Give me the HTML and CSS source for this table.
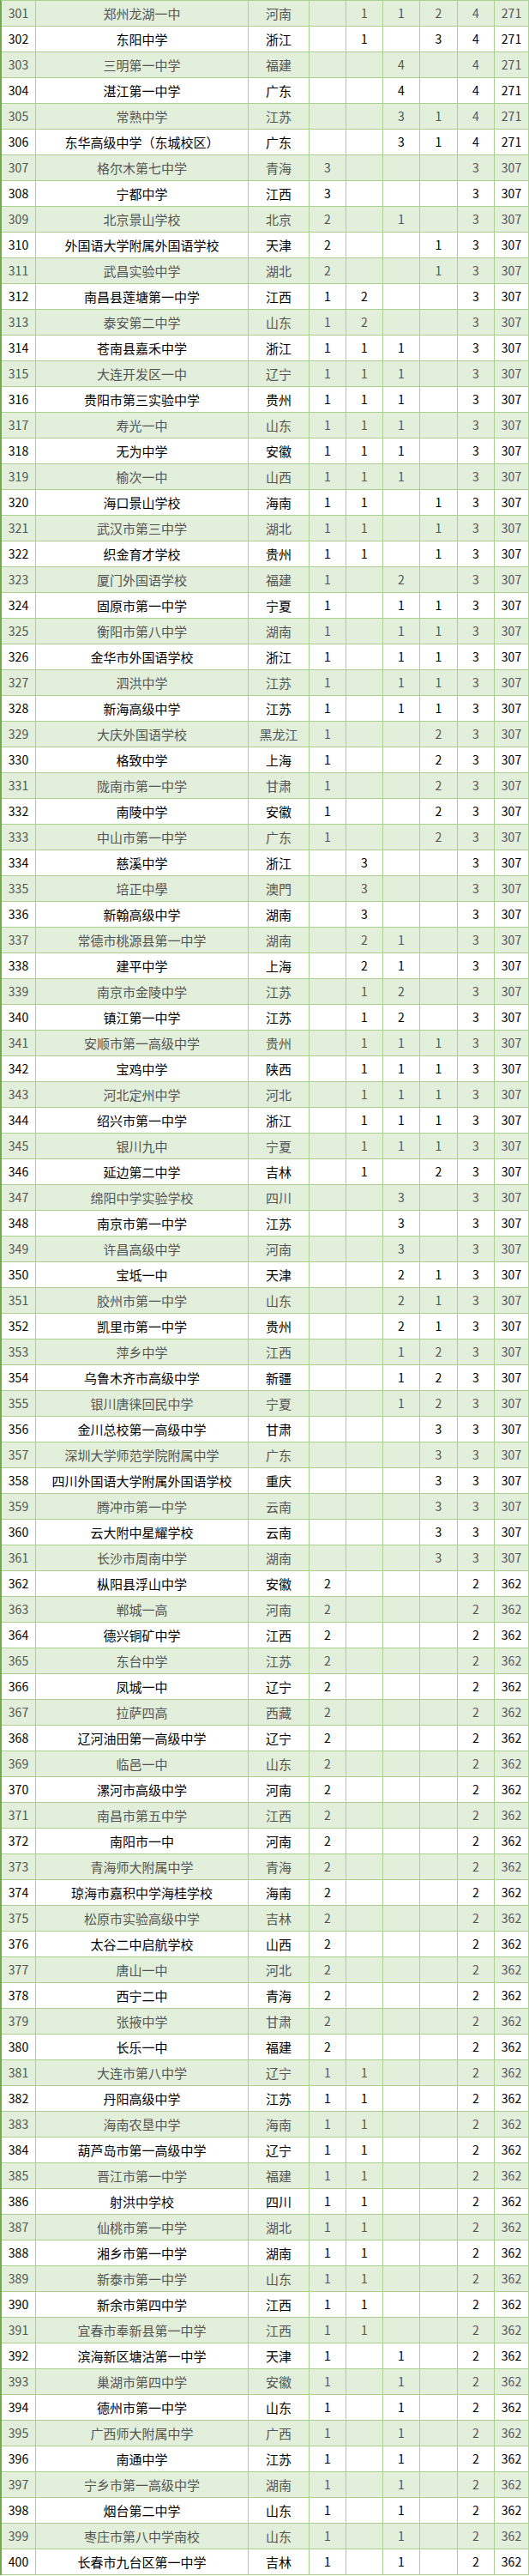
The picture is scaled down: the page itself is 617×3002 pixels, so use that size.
FILE: index.html
```html
<!DOCTYPE html>
<html lang="zh-CN">
<head>
<meta charset="utf-8">
<title>排名 301-400</title>
<link rel="stylesheet" href="styles.css">
</head>
<body>
<div class="t">
<div class="r"><span>301</span><span class="n">郑州龙湖一中</span><span class="p">河南</span><span></span><span>1</span><span>1</span><span>2</span><span>4</span><span>271</span></div>
<div class="r"><span>302</span><span class="n">东阳中学</span><span class="p">浙江</span><span></span><span>1</span><span></span><span>3</span><span>4</span><span>271</span></div>
<div class="r"><span>303</span><span class="n">三明第一中学</span><span class="p">福建</span><span></span><span></span><span>4</span><span></span><span>4</span><span>271</span></div>
<div class="r"><span>304</span><span class="n">湛江第一中学</span><span class="p">广东</span><span></span><span></span><span>4</span><span></span><span>4</span><span>271</span></div>
<div class="r"><span>305</span><span class="n">常熟中学</span><span class="p">江苏</span><span></span><span></span><span>3</span><span>1</span><span>4</span><span>271</span></div>
<div class="r"><span>306</span><span class="n">东华高级中学（东城校区）</span><span class="p">广东</span><span></span><span></span><span>3</span><span>1</span><span>4</span><span>271</span></div>
<div class="r"><span>307</span><span class="n">格尔木第七中学</span><span class="p">青海</span><span>3</span><span></span><span></span><span></span><span>3</span><span>307</span></div>
<div class="r"><span>308</span><span class="n">宁都中学</span><span class="p">江西</span><span>3</span><span></span><span></span><span></span><span>3</span><span>307</span></div>
<div class="r"><span>309</span><span class="n">北京景山学校</span><span class="p">北京</span><span>2</span><span></span><span>1</span><span></span><span>3</span><span>307</span></div>
<div class="r"><span>310</span><span class="n">外国语大学附属外国语学校</span><span class="p">天津</span><span>2</span><span></span><span></span><span>1</span><span>3</span><span>307</span></div>
<div class="r"><span>311</span><span class="n">武昌实验中学</span><span class="p">湖北</span><span>2</span><span></span><span></span><span>1</span><span>3</span><span>307</span></div>
<div class="r"><span>312</span><span class="n">南昌县莲塘第一中学</span><span class="p">江西</span><span>1</span><span>2</span><span></span><span></span><span>3</span><span>307</span></div>
<div class="r"><span>313</span><span class="n">泰安第二中学</span><span class="p">山东</span><span>1</span><span>2</span><span></span><span></span><span>3</span><span>307</span></div>
<div class="r"><span>314</span><span class="n">苍南县嘉禾中学</span><span class="p">浙江</span><span>1</span><span>1</span><span>1</span><span></span><span>3</span><span>307</span></div>
<div class="r"><span>315</span><span class="n">大连开发区一中</span><span class="p">辽宁</span><span>1</span><span>1</span><span>1</span><span></span><span>3</span><span>307</span></div>
<div class="r"><span>316</span><span class="n">贵阳市第三实验中学</span><span class="p">贵州</span><span>1</span><span>1</span><span>1</span><span></span><span>3</span><span>307</span></div>
<div class="r"><span>317</span><span class="n">寿光一中</span><span class="p">山东</span><span>1</span><span>1</span><span>1</span><span></span><span>3</span><span>307</span></div>
<div class="r"><span>318</span><span class="n">无为中学</span><span class="p">安徽</span><span>1</span><span>1</span><span>1</span><span></span><span>3</span><span>307</span></div>
<div class="r"><span>319</span><span class="n">榆次一中</span><span class="p">山西</span><span>1</span><span>1</span><span>1</span><span></span><span>3</span><span>307</span></div>
<div class="r"><span>320</span><span class="n">海口景山学校</span><span class="p">海南</span><span>1</span><span>1</span><span></span><span>1</span><span>3</span><span>307</span></div>
<div class="r"><span>321</span><span class="n">武汉市第三中学</span><span class="p">湖北</span><span>1</span><span>1</span><span></span><span>1</span><span>3</span><span>307</span></div>
<div class="r"><span>322</span><span class="n">织金育才学校</span><span class="p">贵州</span><span>1</span><span>1</span><span></span><span>1</span><span>3</span><span>307</span></div>
<div class="r"><span>323</span><span class="n">厦门外国语学校</span><span class="p">福建</span><span>1</span><span></span><span>2</span><span></span><span>3</span><span>307</span></div>
<div class="r"><span>324</span><span class="n">固原市第一中学</span><span class="p">宁夏</span><span>1</span><span></span><span>1</span><span>1</span><span>3</span><span>307</span></div>
<div class="r"><span>325</span><span class="n">衡阳市第八中学</span><span class="p">湖南</span><span>1</span><span></span><span>1</span><span>1</span><span>3</span><span>307</span></div>
<div class="r"><span>326</span><span class="n">金华市外国语学校</span><span class="p">浙江</span><span>1</span><span></span><span>1</span><span>1</span><span>3</span><span>307</span></div>
<div class="r"><span>327</span><span class="n">泗洪中学</span><span class="p">江苏</span><span>1</span><span></span><span>1</span><span>1</span><span>3</span><span>307</span></div>
<div class="r"><span>328</span><span class="n">新海高级中学</span><span class="p">江苏</span><span>1</span><span></span><span>1</span><span>1</span><span>3</span><span>307</span></div>
<div class="r"><span>329</span><span class="n">大庆外国语学校</span><span class="p">黑龙江</span><span>1</span><span></span><span></span><span>2</span><span>3</span><span>307</span></div>
<div class="r"><span>330</span><span class="n">格致中学</span><span class="p">上海</span><span>1</span><span></span><span></span><span>2</span><span>3</span><span>307</span></div>
<div class="r"><span>331</span><span class="n">陇南市第一中学</span><span class="p">甘肃</span><span>1</span><span></span><span></span><span>2</span><span>3</span><span>307</span></div>
<div class="r"><span>332</span><span class="n">南陵中学</span><span class="p">安徽</span><span>1</span><span></span><span></span><span>2</span><span>3</span><span>307</span></div>
<div class="r"><span>333</span><span class="n">中山市第一中学</span><span class="p">广东</span><span>1</span><span></span><span></span><span>2</span><span>3</span><span>307</span></div>
<div class="r"><span>334</span><span class="n">慈溪中学</span><span class="p">浙江</span><span></span><span>3</span><span></span><span></span><span>3</span><span>307</span></div>
<div class="r"><span>335</span><span class="n">培正中學</span><span class="p">澳門</span><span></span><span>3</span><span></span><span></span><span>3</span><span>307</span></div>
<div class="r"><span>336</span><span class="n">新翰高级中学</span><span class="p">湖南</span><span></span><span>3</span><span></span><span></span><span>3</span><span>307</span></div>
<div class="r"><span>337</span><span class="n">常德市桃源县第一中学</span><span class="p">湖南</span><span></span><span>2</span><span>1</span><span></span><span>3</span><span>307</span></div>
<div class="r"><span>338</span><span class="n">建平中学</span><span class="p">上海</span><span></span><span>2</span><span>1</span><span></span><span>3</span><span>307</span></div>
<div class="r"><span>339</span><span class="n">南京市金陵中学</span><span class="p">江苏</span><span></span><span>1</span><span>2</span><span></span><span>3</span><span>307</span></div>
<div class="r"><span>340</span><span class="n">镇江第一中学</span><span class="p">江苏</span><span></span><span>1</span><span>2</span><span></span><span>3</span><span>307</span></div>
<div class="r"><span>341</span><span class="n">安顺市第一高级中学</span><span class="p">贵州</span><span></span><span>1</span><span>1</span><span>1</span><span>3</span><span>307</span></div>
<div class="r"><span>342</span><span class="n">宝鸡中学</span><span class="p">陕西</span><span></span><span>1</span><span>1</span><span>1</span><span>3</span><span>307</span></div>
<div class="r"><span>343</span><span class="n">河北定州中学</span><span class="p">河北</span><span></span><span>1</span><span>1</span><span>1</span><span>3</span><span>307</span></div>
<div class="r"><span>344</span><span class="n">绍兴市第一中学</span><span class="p">浙江</span><span></span><span>1</span><span>1</span><span>1</span><span>3</span><span>307</span></div>
<div class="r"><span>345</span><span class="n">银川九中</span><span class="p">宁夏</span><span></span><span>1</span><span>1</span><span>1</span><span>3</span><span>307</span></div>
<div class="r"><span>346</span><span class="n">延边第二中学</span><span class="p">吉林</span><span></span><span>1</span><span></span><span>2</span><span>3</span><span>307</span></div>
<div class="r"><span>347</span><span class="n">绵阳中学实验学校</span><span class="p">四川</span><span></span><span></span><span>3</span><span></span><span>3</span><span>307</span></div>
<div class="r"><span>348</span><span class="n">南京市第一中学</span><span class="p">江苏</span><span></span><span></span><span>3</span><span></span><span>3</span><span>307</span></div>
<div class="r"><span>349</span><span class="n">许昌高级中学</span><span class="p">河南</span><span></span><span></span><span>3</span><span></span><span>3</span><span>307</span></div>
<div class="r"><span>350</span><span class="n">宝坻一中</span><span class="p">天津</span><span></span><span></span><span>2</span><span>1</span><span>3</span><span>307</span></div>
<div class="r"><span>351</span><span class="n">胶州市第一中学</span><span class="p">山东</span><span></span><span></span><span>2</span><span>1</span><span>3</span><span>307</span></div>
<div class="r"><span>352</span><span class="n">凯里市第一中学</span><span class="p">贵州</span><span></span><span></span><span>2</span><span>1</span><span>3</span><span>307</span></div>
<div class="r"><span>353</span><span class="n">萍乡中学</span><span class="p">江西</span><span></span><span></span><span>1</span><span>2</span><span>3</span><span>307</span></div>
<div class="r"><span>354</span><span class="n">乌鲁木齐市高级中学</span><span class="p">新疆</span><span></span><span></span><span>1</span><span>2</span><span>3</span><span>307</span></div>
<div class="r"><span>355</span><span class="n">银川唐徕回民中学</span><span class="p">宁夏</span><span></span><span></span><span>1</span><span>2</span><span>3</span><span>307</span></div>
<div class="r"><span>356</span><span class="n">金川总校第一高级中学</span><span class="p">甘肃</span><span></span><span></span><span></span><span>3</span><span>3</span><span>307</span></div>
<div class="r"><span>357</span><span class="n">深圳大学师范学院附属中学</span><span class="p">广东</span><span></span><span></span><span></span><span>3</span><span>3</span><span>307</span></div>
<div class="r"><span>358</span><span class="n">四川外国语大学附属外国语学校</span><span class="p">重庆</span><span></span><span></span><span></span><span>3</span><span>3</span><span>307</span></div>
<div class="r"><span>359</span><span class="n">腾冲市第一中学</span><span class="p">云南</span><span></span><span></span><span></span><span>3</span><span>3</span><span>307</span></div>
<div class="r"><span>360</span><span class="n">云大附中星耀学校</span><span class="p">云南</span><span></span><span></span><span></span><span>3</span><span>3</span><span>307</span></div>
<div class="r"><span>361</span><span class="n">长沙市周南中学</span><span class="p">湖南</span><span></span><span></span><span></span><span>3</span><span>3</span><span>307</span></div>
<div class="r"><span>362</span><span class="n">枞阳县浮山中学</span><span class="p">安徽</span><span>2</span><span></span><span></span><span></span><span>2</span><span>362</span></div>
<div class="r"><span>363</span><span class="n">郸城一高</span><span class="p">河南</span><span>2</span><span></span><span></span><span></span><span>2</span><span>362</span></div>
<div class="r"><span>364</span><span class="n">德兴铜矿中学</span><span class="p">江西</span><span>2</span><span></span><span></span><span></span><span>2</span><span>362</span></div>
<div class="r"><span>365</span><span class="n">东台中学</span><span class="p">江苏</span><span>2</span><span></span><span></span><span></span><span>2</span><span>362</span></div>
<div class="r"><span>366</span><span class="n">凤城一中</span><span class="p">辽宁</span><span>2</span><span></span><span></span><span></span><span>2</span><span>362</span></div>
<div class="r"><span>367</span><span class="n">拉萨四高</span><span class="p">西藏</span><span>2</span><span></span><span></span><span></span><span>2</span><span>362</span></div>
<div class="r"><span>368</span><span class="n">辽河油田第一高级中学</span><span class="p">辽宁</span><span>2</span><span></span><span></span><span></span><span>2</span><span>362</span></div>
<div class="r"><span>369</span><span class="n">临邑一中</span><span class="p">山东</span><span>2</span><span></span><span></span><span></span><span>2</span><span>362</span></div>
<div class="r"><span>370</span><span class="n">漯河市高级中学</span><span class="p">河南</span><span>2</span><span></span><span></span><span></span><span>2</span><span>362</span></div>
<div class="r"><span>371</span><span class="n">南昌市第五中学</span><span class="p">江西</span><span>2</span><span></span><span></span><span></span><span>2</span><span>362</span></div>
<div class="r"><span>372</span><span class="n">南阳市一中</span><span class="p">河南</span><span>2</span><span></span><span></span><span></span><span>2</span><span>362</span></div>
<div class="r"><span>373</span><span class="n">青海师大附属中学</span><span class="p">青海</span><span>2</span><span></span><span></span><span></span><span>2</span><span>362</span></div>
<div class="r"><span>374</span><span class="n">琼海市嘉积中学海桂学校</span><span class="p">海南</span><span>2</span><span></span><span></span><span></span><span>2</span><span>362</span></div>
<div class="r"><span>375</span><span class="n">松原市实验高级中学</span><span class="p">吉林</span><span>2</span><span></span><span></span><span></span><span>2</span><span>362</span></div>
<div class="r"><span>376</span><span class="n">太谷二中启航学校</span><span class="p">山西</span><span>2</span><span></span><span></span><span></span><span>2</span><span>362</span></div>
<div class="r"><span>377</span><span class="n">唐山一中</span><span class="p">河北</span><span>2</span><span></span><span></span><span></span><span>2</span><span>362</span></div>
<div class="r"><span>378</span><span class="n">西宁二中</span><span class="p">青海</span><span>2</span><span></span><span></span><span></span><span>2</span><span>362</span></div>
<div class="r"><span>379</span><span class="n">张掖中学</span><span class="p">甘肃</span><span>2</span><span></span><span></span><span></span><span>2</span><span>362</span></div>
<div class="r"><span>380</span><span class="n">长乐一中</span><span class="p">福建</span><span>2</span><span></span><span></span><span></span><span>2</span><span>362</span></div>
<div class="r"><span>381</span><span class="n">大连市第八中学</span><span class="p">辽宁</span><span>1</span><span>1</span><span></span><span></span><span>2</span><span>362</span></div>
<div class="r"><span>382</span><span class="n">丹阳高级中学</span><span class="p">江苏</span><span>1</span><span>1</span><span></span><span></span><span>2</span><span>362</span></div>
<div class="r"><span>383</span><span class="n">海南农垦中学</span><span class="p">海南</span><span>1</span><span>1</span><span></span><span></span><span>2</span><span>362</span></div>
<div class="r"><span>384</span><span class="n">葫芦岛市第一高级中学</span><span class="p">辽宁</span><span>1</span><span>1</span><span></span><span></span><span>2</span><span>362</span></div>
<div class="r"><span>385</span><span class="n">晋江市第一中学</span><span class="p">福建</span><span>1</span><span>1</span><span></span><span></span><span>2</span><span>362</span></div>
<div class="r"><span>386</span><span class="n">射洪中学校</span><span class="p">四川</span><span>1</span><span>1</span><span></span><span></span><span>2</span><span>362</span></div>
<div class="r"><span>387</span><span class="n">仙桃市第一中学</span><span class="p">湖北</span><span>1</span><span>1</span><span></span><span></span><span>2</span><span>362</span></div>
<div class="r"><span>388</span><span class="n">湘乡市第一中学</span><span class="p">湖南</span><span>1</span><span>1</span><span></span><span></span><span>2</span><span>362</span></div>
<div class="r"><span>389</span><span class="n">新泰市第一中学</span><span class="p">山东</span><span>1</span><span>1</span><span></span><span></span><span>2</span><span>362</span></div>
<div class="r"><span>390</span><span class="n">新余市第四中学</span><span class="p">江西</span><span>1</span><span>1</span><span></span><span></span><span>2</span><span>362</span></div>
<div class="r"><span>391</span><span class="n">宜春市奉新县第一中学</span><span class="p">江西</span><span>1</span><span>1</span><span></span><span></span><span>2</span><span>362</span></div>
<div class="r"><span>392</span><span class="n">滨海新区塘沽第一中学</span><span class="p">天津</span><span>1</span><span></span><span>1</span><span></span><span>2</span><span>362</span></div>
<div class="r"><span>393</span><span class="n">巢湖市第四中学</span><span class="p">安徽</span><span>1</span><span></span><span>1</span><span></span><span>2</span><span>362</span></div>
<div class="r"><span>394</span><span class="n">德州市第一中学</span><span class="p">山东</span><span>1</span><span></span><span>1</span><span></span><span>2</span><span>362</span></div>
<div class="r"><span>395</span><span class="n">广西师大附属中学</span><span class="p">广西</span><span>1</span><span></span><span>1</span><span></span><span>2</span><span>362</span></div>
<div class="r"><span>396</span><span class="n">南通中学</span><span class="p">江苏</span><span>1</span><span></span><span>1</span><span></span><span>2</span><span>362</span></div>
<div class="r"><span>397</span><span class="n">宁乡市第一高级中学</span><span class="p">湖南</span><span>1</span><span></span><span>1</span><span></span><span>2</span><span>362</span></div>
<div class="r"><span>398</span><span class="n">烟台第二中学</span><span class="p">山东</span><span>1</span><span></span><span>1</span><span></span><span>2</span><span>362</span></div>
<div class="r"><span>399</span><span class="n">枣庄市第八中学南校</span><span class="p">山东</span><span>1</span><span></span><span>1</span><span></span><span>2</span><span>362</span></div>
<div class="r"><span>400</span><span class="n">长春市九台区第一中学</span><span class="p">吉林</span><span>1</span><span></span><span>1</span><span></span><span>2</span><span>362</span></div>
</div>
</body>
</html>
```
FILE: styles.css
```css
html, body {
  margin: 0;
  padding: 0;
  background: #ffffff;
}

.t {
  width: 617px;
  box-sizing: border-box;
  border-left: 2px solid #70ad47;
  border-top: 1px solid #a9d08e;
  font-family: "Noto Sans CJK SC", "Noto Sans", sans-serif;
}

.r {
  display: grid;
  grid-template-columns: 40px 248px 71px 43px 43px 43px 44px 43px 40px;
  height: 30px;
  box-sizing: border-box;
  border-bottom: 1px solid #a9d08e;
}

.r:nth-child(odd) {
  background: #e2efda;
  color: #555555;
}

.r:nth-child(even) {
  background: #ffffff;
  color: #000000;
}

.r > span {
  box-sizing: border-box;
  border-right: 1px solid #a9d08e;
  text-align: center;
  font-size: 14px;
  line-height: 29px;
  white-space: nowrap;
  overflow: hidden;
}

.r > span.n,
.r > span.p {
  font-size: 15px;
}
```
